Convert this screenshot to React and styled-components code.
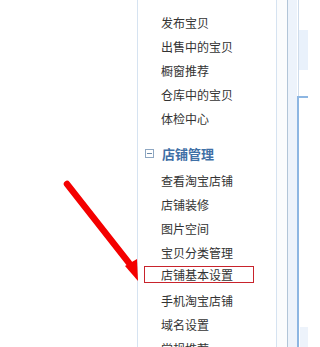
import styled, { createGlobalStyle } from "styled-components";

const GlobalStyle = createGlobalStyle`
  html, body {
    margin: 0;
    padding: 0;
    background: #fff;
  }
  body {
    font-family: "Noto Sans CJK SC", "Noto Sans", sans-serif;
    font-size: 12px;
    color: #333;
  }
`;

const Page = styled.div`
  position: relative;
  display: flex;
  width: 308px;
  height: 347px;
  overflow: hidden;
`;

const Blank = styled.div`
  width: 137px;
  flex-shrink: 0;
`;

const Sidebar = styled.div`
  width: 138px;
  flex-shrink: 0;
  border-left: 1px solid #d6e3f1;
  border-right: 1px solid #d6e3f1;
  padding-top: 10px;
  box-sizing: content-box;
`;

const Item = styled.div`
  display: flex;
  align-items: center;
  height: 24px;
  margin-left: 6px;
`;

const Label = styled.span`
  display: flex;
  align-items: center;
  box-sizing: border-box;
  width: 110px;
  height: 17px;
  padding-left: 16px;
  border: 1px solid ${({ $active }) => ($active ? "#c8232c" : "transparent")};
  color: #333;
  white-space: nowrap;
  margin-top: ${({ $active }) => ($active ? "-3px" : "0")};
`;

const Group = styled.div`
  display: flex;
  align-items: center;
  height: 24px;
  margin: 11px 0 3px 6px;
  gap: 8px;
  padding-left: 1px;
  font-size: 13px;
  font-weight: bold;
  color: #3f70a6;
`;

const Toggle = styled.span`
  position: relative;
  width: 7px;
  height: 7px;
  border: 1px solid #8ea7c2;
  flex-shrink: 0;

  &::after {
    content: "";
    position: absolute;
    left: 1px;
    right: 1px;
    top: 3px;
    height: 1px;
    background: #6d8aa8;
  }
`;

const Gutter = styled.div`
  width: 10px;
  flex-shrink: 0;
  background: #fbfcfd;
  border-right: 1px solid #b2c5d8;
`;

const Rail = styled.div`
  width: 9px;
  flex-shrink: 0;
  background: #edf3fb;
`;

const Main = styled.div`
  flex: 1;
  display: flex;
  flex-direction: column;
`;

const TopPanel = styled.div`
  height: 96px;
  border-left: 1px solid #cfdceb;
  margin-left: 1px;
  padding-top: 30px;
  box-sizing: border-box;
`;

const TabBar = styled.div`
  height: 40px;
  background: #e9f1fb;
`;

const ContentPanel = styled.div`
  flex: 1;
  display: flex;
  flex-direction: column;
  border-top: 2px solid #8db6e2;
  border-left: 2px solid #8db6e2;
`;

const ContentBody = styled.div`
  height: 229px;
`;

const ContentFoot = styled.div`
  flex: 1;
  margin-left: 1px;
  background: #edf3fb;
`;

const Arrow = styled.svg`
  position: absolute;
  left: 0;
  top: 0;
  pointer-events: none;
`;

const first = ["发布宝贝", "出售中的宝贝", "橱窗推荐", "仓库中的宝贝", "体检中心"];
const shop = [
  "查看淘宝店铺",
  "店铺装修",
  "图片空间",
  "宝贝分类管理",
  "店铺基本设置",
  "手机淘宝店铺",
  "域名设置",
  "常规推荐",
];

export default function App() {
  return (
    <>
      <GlobalStyle />
      <Page>
        <Blank />
        <Sidebar>
          {first.map((t) => (
            <Item key={t}>
              <Label>{t}</Label>
            </Item>
          ))}
          <Group>
            <Toggle />
            店铺管理
          </Group>
          {shop.map((t) => (
            <Item key={t}>
              <Label $active={t === "店铺基本设置"}>{t}</Label>
            </Item>
          ))}
        </Sidebar>
        <Gutter />
        <Rail />
        <Main>
          <TopPanel>
            <TabBar />
          </TopPanel>
          <ContentPanel>
            <ContentBody />
            <ContentFoot />
          </ContentPanel>
        </Main>
        <Arrow width="308" height="347" viewBox="0 0 308 347">
          <line
            x1="67"
            y1="184"
            x2="129"
            y2="263"
            stroke="#f40000"
            strokeWidth="6.5"
            strokeLinecap="round"
          />
          <polygon points="125,266 137,259 138,281" fill="#f40000" />
        </Arrow>
      </Page>
    </>
  );
}
